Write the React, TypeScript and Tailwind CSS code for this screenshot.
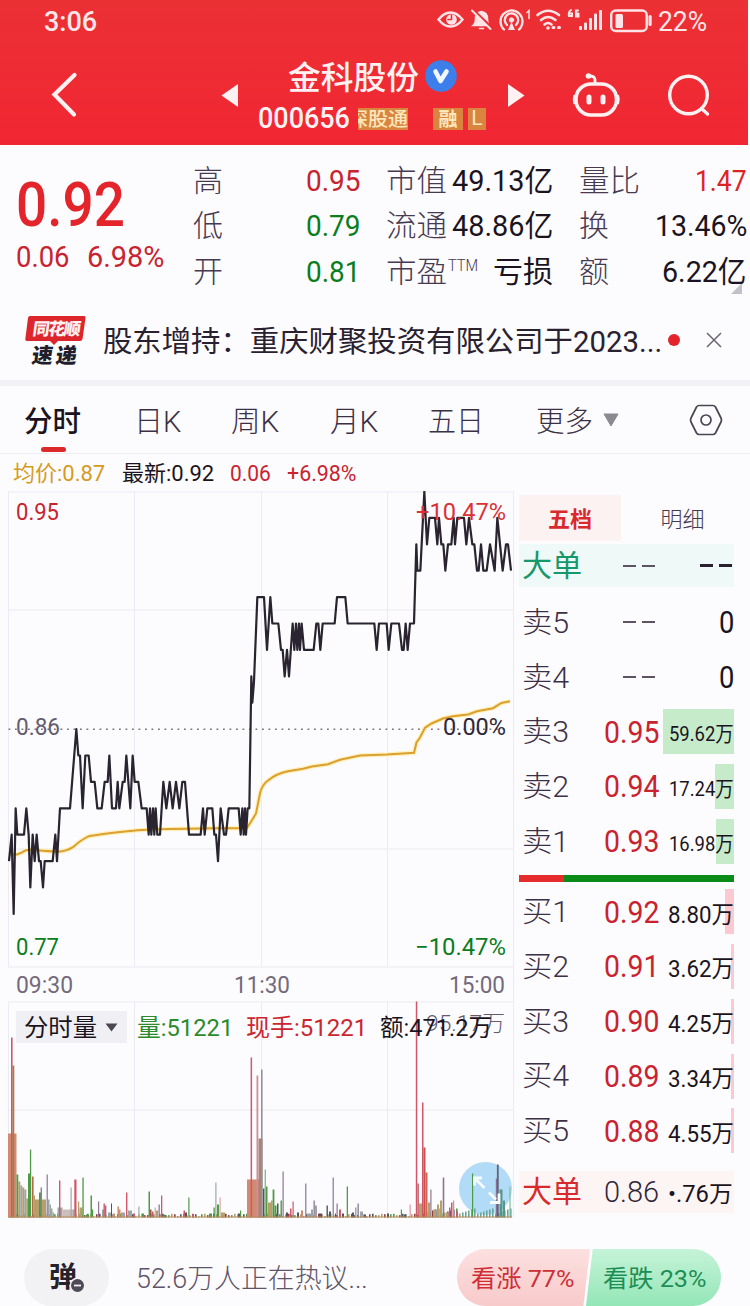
import { useLayoutEffect, useRef, type ReactNode } from "react";

const FONT = "font-[Roboto,'Noto_Sans_CJK_SC',sans-serif]";

/** One line of text, condensed or stretched to fill the width of its box. */
function Fit({ className = "", children }: { className?: string; children: ReactNode }) {
  const box = useRef<HTMLSpanElement>(null);
  const text = useRef<HTMLSpanElement>(null);
  useLayoutEffect(() => {
    if (!box.current || !text.current) return;
    const natural = text.current.offsetWidth;
    if (natural > 0) text.current.style.transform = `scaleX(${box.current.clientWidth / natural})`;
  });
  return (
    <span ref={box} className={`flex shrink-0 items-center leading-none ${className}`}>
      <span ref={text} className="inline-block origin-left whitespace-nowrap">
        {children}
      </span>
    </span>
  );
}

function StatusIcons() {
  return (
    <svg className="h-[36px] w-[222px] shrink-0" viewBox="434 4 222 36" fill="none" stroke="#ffe3e6" strokeWidth="2.4" strokeLinecap="round">
      <path d="M438.500 19.500Q444 12.500 450.500 12.500T462.500 19.500Q457 26.500 450.500 26.500T438.500 19.500Z" />
      <circle cx="451.500" cy="19.500" r="5.300" fill="#ffe3e6" stroke="none" />
      <path d="M451.500 15v4.500h-3.500" stroke="#ed2c32" strokeWidth="1.500" />
      <path d="M473 25.500q2.500-2 2.500-7q0-6 6-7q6 1 6 7q0 5 2 7ZM479.500 28.500h4" fill="#ffe3e6" strokeWidth="1.500" />
      <path d="M473 10L493 29" stroke="#ed2c32" strokeWidth="3" />
      <path d="M472 10.500L490.500 29" strokeWidth="2" />
      <path d="M504 29.500A11 11 0 1 1 519 29.500M507 25A6.700 6.700 0 1 1 516 25" strokeWidth="2.300" />
      <circle cx="511.500" cy="20" r="2.200" fill="#ffe3e6" strokeWidth="1" />
      <path d="M511.500 22l-3.500 8h7z" fill="#ffe3e6" stroke="none" />
      <path d="M527 12.500l2-2v8" strokeWidth="1.500" />
      <path d="M537.500 15Q548 6.500 559 15M541 20Q548 14 555.500 20M544.500 24.500Q548 21.500 551.500 24.500" strokeWidth="2.600" />
      <circle cx="548" cy="28" r="1.800" fill="#ffe3e6" stroke="none" />
      <path d="M553 27.500h1M558.500 27.500h1" strokeWidth="3" />
      <path d="M571 10q-3 2-2 6h3v-2.500h-2M576.500 12.500v3M578 10.500h-2v6h2.500v-3" strokeWidth="2" />
      <g stroke="none" fill="#ffe3e6">
        <rect x="579" y="26" width="3" height="4" rx="1" />
        <rect x="584" y="22.500" width="3" height="7.500" rx="1" />
        <rect x="589" y="18" width="3" height="12" rx="1" />
        <rect x="594" y="13.500" width="3" height="16.500" rx="1" />
        <rect x="599" y="10" width="3" height="20" rx="1" />
        <rect x="615.500" y="14" width="7.500" height="14" rx="1.500" />
        <rect x="648.500" y="15" width="3.200" height="11" rx="1.500" />
      </g>
      <rect x="611.200" y="10.500" width="35.500" height="20.500" rx="4.500" strokeWidth="2.400" />
    </svg>
  );
}

function Header() {
  return (
    <header className="flex h-[145px] w-[748px] flex-col bg-linear-to-b from-[#eb3034] to-[#f12633] text-[#fff1f2]">
      <div className="flex h-[44px] items-center pl-[44px] text-[28px] text-[#ffe6e8]">
        <Fit className="w-[53px] font-medium">3:06</Fit>
        <div className="ml-[337px] flex items-center">
          <StatusIcons />
          <Fit className="ml-[2px] w-[49px] text-[27px]">22%</Fit>
        </div>
      </div>
      <div className="flex h-[101px] items-center">
        <svg className="ml-[48px] h-[50px] w-[34px]" viewBox="0 0 34 50" fill="none" stroke="#fff1f2" strokeWidth="4.200" strokeLinecap="round">
          <path d="M26.500 5L6.500 24.500L26 44.500" />
        </svg>
        <svg className="ml-[138px] h-[24px] w-[19px]" viewBox="0 0 19 24" fill="#fff1f2">
          <path d="M1.500 12.500L18 1V24Z" />
        </svg>
        <div className="ml-[19px] flex w-[232px] flex-col">
          <div className="flex h-[46px] items-center">
            <Fit className="mt-[4px] ml-[30px] w-[131px] text-[32px] font-medium">金科股份</Fit>
            <svg className="ml-[5px] h-[34px] w-[34px]" viewBox="0 0 34 34">
              <circle cx="17" cy="17" r="15.800" fill="#3c7fea" />
              <path d="M11.500 12.500L16.500 22L22.500 12.500" fill="none" stroke="#f1f7ff" strokeWidth="4.600" strokeLinecap="round" strokeLinejoin="round" />
            </svg>
          </div>
          <div className="flex h-[38px] items-center">
            <Fit className="mt-[2px] w-[92px] text-[29px] font-medium">000656</Fit>
            <div className="mt-[2px] ml-[8px] flex h-[22px] w-[50px] items-center justify-end overflow-hidden bg-[#d98540] text-[#fde8bd]">
              <Fit className="mt-[2px] w-[60px] pr-[3px] text-[19px] font-medium">深股通</Fit>
            </div>
            <div className="mt-[2px] ml-[25px] flex h-[22px] w-[30px] items-center justify-center bg-[#d98540] text-[#fde8bd]">
              <Fit className="mt-[2px] w-[19px] text-[19px] font-bold">融</Fit>
            </div>
            <div className="mt-[2px] ml-[5px] flex h-[22px] w-[18px] items-center justify-center bg-[#d98540] text-[21px] leading-none text-[#fde8bd]">L</div>
          </div>
        </div>
        <svg className="ml-[17px] h-[24px] w-[19px]" viewBox="0 0 19 24" fill="#fff1f2">
          <path d="M17.500 12.500L1 1V24Z" />
        </svg>
        <svg className="ml-[43px] h-[48px] w-[54px]" viewBox="568 71 54 48" fill="none" stroke="#fff1f2" strokeWidth="3.600" strokeLinecap="round">
          <rect x="575" y="84" width="40.500" height="31" rx="15" />
          <path d="M573.600 96q-1.200 3.500 0 7M616.900 96q1.200 3.500 0 7" strokeWidth="2.600" />
          <path d="M588 76q7-1 6 7" strokeWidth="3" />
          <circle cx="587.500" cy="76" r="2.800" fill="#fff1f2" stroke="none" />
          <path d="M588 97v5M602 97v5" strokeWidth="5" />
        </svg>
        <svg className="ml-[43px] h-[50px] w-[48px]" viewBox="665 70 48 50" fill="none" stroke="#fff1f2" strokeWidth="3.400" strokeLinecap="round">
          <circle cx="687.500" cy="95" r="18.800" />
          <path d="M700.500 108.500L706.500 114" />
        </svg>
      </div>
    </header>
  );
}

const quoteRows = [
  { a: "高", av: "0.95", ac: "text-[#c8232f]", b: "市值", bv: "49.13亿", c: "量比", cv: "1.47", cw: "w-[52px]", cc: "text-[#dc2427]" },
  { a: "低", av: "0.79", ac: "text-[#0b7d1c]", b: "流通", bv: "48.86亿", c: "换", cv: "13.46%", cw: "w-[92px]", cc: "text-[#1b1420]" },
  { a: "开", av: "0.81", ac: "text-[#0b7d1c]", b: "市盈", bv: "亏损", c: "额", cv: "6.22亿", cw: "w-[85px]", cc: "text-[#1b1420]" },
];

function Quote() {
  return (
    <section className="flex h-[155px]">
      <div className="w-[193px] pt-[25px] pl-[16px] text-[#c8232f]">
        <Fit className="h-[69px] w-[109px] text-[62px] font-medium text-[#e3242a]">0.92</Fit>
        <div className="flex h-[36px] items-center gap-[17px] text-[30px]">
          <Fit className="w-[54px]">0.06</Fit>
          <Fit className="w-[77px]">6.98%</Fit>
        </div>
      </div>
      <div className="flex flex-1 flex-col pt-[13px] text-[30px]">
        {quoteRows.map((r) => (
          <div key={r.a} className="flex h-[45.500px] items-center">
            <Fit className="w-[30px] font-light text-[#473a50]">{r.a}</Fit>
            <Fit className={`ml-[83px] w-[55px] ${r.ac}`}>{r.av}</Fit>
            <Fit className="ml-[25px] w-[61px] font-light text-[#473a50]">{r.b}</Fit>
            {r.b === "市盈" ? (
              <>
                <Fit className="mb-[12px] ml-[1px] w-[30px] text-[16px] font-light text-[#473a50]">TTM</Fit>
                <Fit className="ml-[15px] w-[60px] text-[#1b1420]">{r.bv}</Fit>
              </>
            ) : (
              <Fit className="ml-[5px] w-[101px] text-[#1b1420]">{r.bv}</Fit>
            )}
            <Fit className={`ml-[26px] font-light text-[#473a50] ${r.c.length > 1 ? "w-[61px]" : "w-[30px]"}`}>{r.c}</Fit>
            <span className="flex flex-1 justify-end pr-[3px]">
              <Fit className={`${r.cw} ${r.cc}`}>{r.cv}</Fit>
            </span>
          </div>
        ))}
        <svg className="mt-[-12px] mr-[8px] h-[11px] w-[11px] self-end" viewBox="0 0 11 11">
          <path d="M11 0V11H0Z" fill="#c3c0c7" />
        </svg>
      </div>
    </section>
  );
}

function News() {
  return (
    <section className="flex h-[86px] items-center border-b-[6px] border-[#f1f1f6] text-[#2a2130]">
      <svg className="ml-[22px] h-[56px] w-[66px] shrink-0" viewBox="22 312 66 56">
        <path d="M30 316H84Q86 316 85.500 318L82.500 339Q82 341 80 341H58L54 345L50 341H27Q25 341 25.300 339L28 318Q28.300 316 30 316Z" fill="#dc262c" />
        <g transform="skewX(-8)" className="font-['Noto_Sans_CJK_SC',sans-serif]">
          <text x="79" y="335" fontSize="17" fontWeight="900" fill="#fff0f1" textLength="48">同花顺</text>
          <text x="82" y="363.500" fontSize="21" fontWeight="900" fill="#221d2b" textLength="45">速递</text>
        </g>
      </svg>
      <Fit className="mt-[5px] ml-[15px] w-[559px] text-[29px]">股东增持：重庆财聚投资有限公司于2023...</Fit>
      <span className="ml-[6px] h-[12px] w-[12px] rounded-full bg-[#e3242a]" />
      <svg className="ml-[24px] h-[20px] w-[20px]" viewBox="0 0 20 20" stroke="#6c6474" strokeWidth="1.500" fill="none">
        <path d="M3 3L17 17M17 3L3 17" />
      </svg>
    </section>
  );
}

function Tabs() {
  return (
    <nav className="flex h-[68px] items-center border-b border-[#ececf2] text-[29px] font-light text-[#3c3046]">
      <div className="relative ml-[24px] flex h-full items-center font-medium text-[#1b1420]">
        <Fit className="w-[57px] pt-[5px]">分时</Fit>
        <span className="absolute bottom-[1px] left-[17px] h-[5px] w-[25px] rounded-full bg-[#dc2a2a]" />
      </div>
      <Fit className="ml-[53px] w-[47px] pt-[5px]">日K</Fit>
      <Fit className="ml-[50px] w-[48px] pt-[5px]">周K</Fit>
      <Fit className="ml-[51px] w-[48px] pt-[5px]">月K</Fit>
      <Fit className="ml-[50px] w-[56px] pt-[5px]">五日</Fit>
      <Fit className="ml-[52px] w-[57px] pt-[5px]">更多</Fit>
      <svg className="ml-[10px] h-[14px] w-[16px]" viewBox="0 0 16 14">
        <path d="M1 1H15L8 13Z" fill="#8d8991" stroke="#8d8991" strokeLinejoin="round" />
      </svg>
      <svg className="ml-[69px] h-[34px] w-[36px]" viewBox="0 0 36 34" fill="none" stroke="#4c4553" strokeWidth="1.700" strokeLinejoin="round">
        <path d="M11 2.500H25Q26.500 2.500 27.500 4L33 15Q34 17 33 19L27.500 30Q26.500 31.500 25 31.500H11Q9.500 31.500 8.500 30L3 19Q2 17 3 15L8.500 4Q9.500 2.500 11 2.500Z" />
        <circle cx="18" cy="17" r="5" />
      </svg>
    </nav>
  );
}

function InfoLine() {
  return (
    <div className="flex h-[37px] items-center pt-[3px] pl-[13px] text-[22px] text-[#c8232f]">
      <Fit className="w-[92px] text-[#d79a22]">均价:0.87</Fit>
      <Fit className="ml-[17px] w-[92px] text-[#1b1420]">最新:0.92</Fit>
      <Fit className="ml-[16px] w-[41px]">0.06</Fit>
      <Fit className="ml-[16px] w-[70px]">+6.98%</Fit>
    </div>
  );
}

/* Pairs of x (in thirds of a pixel) and price ticks above the 0.86 close. */
const morning: number[][] = [
  [27, -5], [35, -4], [37, -5], [41, -7], [47, -3], [52, -4], [72, -4], [79, -3], [86, -4], [91, -6], [98, -4], [104, -5], [110, -4], [117, -5],
  [122, -5], [129, -6], [134, -5], [158, -5], [166, -4], [171, -5], [180, -3], [210, -3], [229, 0], [235, -1], [240, -1], [248, -3], [256, -1],
  [266, -1], [273, -2], [284, -2], [292, -3], [305, -3], [314, -2], [323, -2], [328, -1], [336, -3], [348, -3], [353, -2], [358, -3], [368, -2],
  [374, -2], [379, -1], [385, -2], [391, -3], [398, -1], [404, -2], [415, -2], [425, -3], [440, -3], [446, -4], [450, -3], [454, -4], [459, -3],
  [463, -4], [467, -3], [472, -4], [480, -4], [490, -2], [499, -3], [509, -2], [518, -3], [528, -2], [538, -3], [547, -2], [555, -2], [567, -4],
  [602, -4], [609, -3], [614, -4], [622, -3], [637, -3], [643, -4], [648, -4], [654, -5], [662, -3], [672, -4], [678, -4], [686, -3], [716, -3],
  [722, -4], [727, -3], [731, -4], [735, -3], [738, -4], [743, -3], [748, -3],
];
const afternoon: number[][] = [
  [34, 2], [37, 1], [42, 1.8], [52, 5], [72, 5], [81, 3], [91, 5], [97, 4], [115, 4], [123, 3], [128, 3], [134, 2], [141, 3], [147, 2], [158, 4],
  [163, 3], [168, 4], [172, 3], [177, 4], [180, 3], [185, 4], [192, 3], [221, 3], [229, 4], [235, 4], [241, 3], [248, 4], [284, 4], [291, 5],
  [316, 5], [323, 4], [403, 4], [410, 3], [417, 4], [440, 4], [446, 3], [454, 4], [477, 4], [486, 3], [491, 3], [497, 4], [503, 3], [510, 4],
  [522, 4], [529, 7], [532, 6], [541, 6], [553, 9], [561, 7], [568, 8], [585, 8], [592, 7], [597, 8], [604, 7], [610, 7], [616, 6], [624, 7],
  [634, 7], [641, 8], [645, 7], [652, 8], [672, 8], [679, 7], [687, 8], [697, 7], [703, 7], [711, 6], [716, 6], [723, 7], [730, 6], [740, 6],
  [750, 7], [764, 6], [772, 8], [788, 6], [798, 7], [804, 7], [813, 6],
];
const priceY = (tick: number) => 728.6 - 26.4 * tick;
const pricePoints = [
  ...morning.map(([x, t]) => `${x / 3},${priceY(t)}`),
  ...afternoon.map(([x, t]) => `${240 + x / 3},${priceY(t)}`),
].join(" ");
const averagePath =
  "M9 854L17 854L22 852Q27 848 37 849.500T61 851Q71 849 75 845T88 836Q100 833.500 133 830.300Q150 828.500 187 828.300L217 827.700H246.700L250.500 822L256 813L260 793Q262 784 268 780Q276 773 288 770.700L303 768.300L312 766L328 763.700L340 759.300L360 755L387 754L414 752.300L416.500 742L420 737L425 727.300L431.500 723L443 718L453 715.700L468 714L477 710.700L493 707.700L501.500 702.500L510 700.700";

/* Volume bars: x, height, width, colour. */
const R = "#d0566a", B = "#d28a70", G = "#4f9a45", D = "#54545c", P = "#8a7596", O = "#b5a06a", S = "#9fa5a5";
const bars: [number, number, number, string][] = [
  [8, 84, 8.500, B], [11, 180, 1.600, R], [12.500, 152, 1.800, "#ab7b4c"], [16.500, 43, 1.800, G], [18.300, 36, 2, O], [20.300, 32, 2, S], [22.300, 30, 2, O], [24.300, 28, 2, S],
  [26.300, 19, 2, O], [28, 44, 2, G], [29.900, 68, 1.300, G], [32, 41, 1.600, "#b36b44"], [33.500, 22, 1.500, O], [35, 18, 5, O], [39, 25, 1.800, G], [40.700, 30, 1, D], [42, 18, 4, O],
  [46.600, 43, 1.200, P], [48, 18, 1.500, S], [49.500, 13, 1.500, S], [51, 9, 1.500, S], [52.500, 5, 1.500, S], [57.500, 10, 5, S], [59, 37, 1.400, R], [62.500, 8, 10, "#cdbebb"],
  [70.500, 30, 1.200, S], [72.500, 8, 2, S], [74.300, 38, 2.200, R], [78, 16, 1.200, O], [79.500, 10, 3, O], [82.400, 40, 1.300, G], [86, 3, 3, G], [90.500, 22, 1.500, G], [92, 8, 1.200, G],
  [98, 16, 1.200, P], [102, 8, 2, S], [103.500, 14, 1.400, R], [105, 12, 1.400, P], [108, 5, 3, S], [111, 14, 1, D], [113, 4, 2, O], [117.500, 11, 1.500, B], [119, 8, 1.500, B], [121, 5, 4, S],
  [126, 25, 1.400, R], [128, 7, 4, S], [133, 4, 2, R], [138.300, 11, 1.200, S], [142, 4, 2, G], [148.500, 26, 1.500, G], [150, 8, 1.500, "#8a5b3a"], [152, 6, 1.500, R], [154.500, 10, 1.500, "#d5b7b4"],
  [156, 7, 2, O], [158.500, 13, 1.300, P], [161, 22, 1.300, R], [163, 3, 2, G], [183.500, 7, 1.500, R], [185, 5, 2, D], [188.300, 20, 1.200, G], [192, 3, 2, R], [209, 4, 3, G], [213.500, 10, 1.300, G],
  [215.300, 35, 1.200, S], [217, 13, 2, G], [219.500, 20, 1.200, "#dca5a0"], [221, 5, 4, O], [238, 4, 2, D], [240, 7, 1.200, G], [247, 38, 15, B], [247, 35, 2, B], [250.600, 160, 1.500, R],
  [256.500, 142, 1.800, "#d08f91"], [258.500, 79, 4, "#a8837c"], [261, 148, 1.600, "#93909a"], [263, 29, 1.500, D], [264.600, 48, 1.400, "#8abd91"], [266, 31, 1.500, G], [268, 15, 3, O], [271, 17, 1.500, O],
  [272.600, 28, 1.800, G], [274.500, 12, 2, G], [277, 14, 1.500, D], [280.500, 17, 1.400, G], [282.500, 46, 1.200, P], [286, 5, 2, D], [290, 9, 1.500, R], [292.500, 16, 1.200, R], [297, 5, 2, D], [301, 7, 2, B],
  [305.200, 34, 1.200, P], [307, 4, 3, S], [311, 8, 2, S], [313.500, 17, 1.300, P], [315, 12, 2, S], [319, 4, 3, D], [326.500, 12, 1.400, D], [329, 6, 2, D], [332.600, 40, 1.200, P], [335, 4, 1, D],
  [336.500, 14, 1.200, P], [339, 8, 2, R], [342, 4, 2, D], [346.700, 31, 1.300, G], [352, 5, 2, D], [355, 10, 1.500, S], [357.500, 14, 1.300, P], [360, 6, 3, S], [364, 3, 2, D], [387, 4, 2, D],
  [400.800, 8, 1.200, G], [404, 3, 2, D], [409.500, 13, 1.300, "#e3a0ac"], [415.800, 216, 1.500, R], [417.500, 34, 1.300, "#b75257"], [419, 14, 3, O], [422, 115, 1.500, R], [423.500, 70, 2, "#cf504b"],
  [425.500, 45, 2, "#cf6452"], [428, 15, 2, O], [430.300, 28, 1.200, P], [433, 8, 3, O], [437, 13, 2, O], [440, 17, 2, O], [442.700, 40, 1.600, P], [446, 5, 2, O], [449, 10, 1.500, R], [451, 15, 1.500, R],
  [453, 17, 1.200, S], [456, 6, 2, R], [472, 44, 1.200, G], [495.800, 39, 1.200, P], [496.900, 53, 1.800, "#626178"], [499.500, 28, 3, "#559789"], [503, 17, 2, "#559789"], [509.400, 31, 1.200, "#7cbf9b"],
];
const tickColors = [G, D, "#8c3d42", O];

function Charts() {
  return (
    <div className="relative h-[727px] w-[519px] shrink-0">
      <svg className={`h-[727px] w-[519px] ${FONT}`} viewBox="0 490.500 519 727" fill="none">
        <g stroke="#ebebf1" strokeWidth="1">
          <path d="M8 491.500H513M8 609.500H513M8 848.500H513M8 966.500H513M8.500 491V966M134.500 491V966M261.500 491V966M387.500 491V966M513.500 491V1217" />
          <path d="M8 1001.500H513M8 1109.500H513M8.500 1001V1217M134.500 1001V1217M261.500 1001V1217M387.500 1001V1217" />
        </g>
        <path d="M8.500 728.800H505" stroke="#77737f" strokeWidth="1.600" strokeDasharray="1.800 4.700" />
        <path d={averagePath} stroke="#fff0bd" strokeWidth="4.500" />
        <path d={averagePath} stroke="#dba02f" strokeWidth="2" />
        <polyline points={pricePoints} stroke="#292430" strokeWidth="2.200" strokeLinejoin="round" />
        <g fontSize="23">
          <text x="16" y="519.500" fill="#c8232f" textLength="43" lengthAdjust="spacingAndGlyphs">0.95</text>
          <text x="416" y="519.500" fill="#dc3038" textLength="90" lengthAdjust="spacingAndGlyphs">+10.47%</text>
          <text x="16" y="734.500" fill="#655b6e" textLength="44" lengthAdjust="spacingAndGlyphs">0.86</text>
          <text x="443" y="734.500" fill="#302739" textLength="63" lengthAdjust="spacingAndGlyphs">0.00%</text>
          <text x="16" y="954.500" fill="#0b7d1c" textLength="43" lengthAdjust="spacingAndGlyphs">0.77</text>
          <text x="415" y="954.500" fill="#0b7d1c" textLength="91" lengthAdjust="spacingAndGlyphs">−10.47%</text>
        </g>
        <g fontSize="23" fill="#746a7c">
          <text x="16" y="992.500" textLength="57" lengthAdjust="spacingAndGlyphs">09:30</text>
          <text x="234" y="992.500" textLength="56" lengthAdjust="spacingAndGlyphs">11:30</text>
          <text x="449" y="992.500" textLength="56" lengthAdjust="spacingAndGlyphs">15:00</text>
        </g>
        <circle cx="485.500" cy="1188" r="26.500" fill="#b2dbf8" />
        {Array.from({ length: 168 }, (_, i) => {
          const h = i > 136 ? 4 + ((i * 7) % 6) : 1 + ((i * i * 5) % 7) / 2.2;
          return <rect key={i} x={9 + i * 3} y={1217 - h} width="1.600" height={h} fill={i > 150 ? "#69a69b" : tickColors[(i * 7 + (i >> 2)) % 4]} />;
        })}
        {bars.map(([x, h, w, c], i) => (
          <rect key={i} x={x} y={1217 - h} width={w} height={h} fill={c} />
        ))}
        <path d="M8 1216.500H512" stroke="#b98b5b" strokeWidth="1.200" />
        <path d="M474.500 1185V1177.500H482M475.500 1178.500L484.500 1187.500M489 1192L496 1199M499 1193V1202H490" stroke="#f5fbff" strokeWidth="2.800" />
        <text x="426" y="1030.500" fontSize="22" fontWeight="300" fill="#655b6e" textLength="79" lengthAdjust="spacingAndGlyphs">95.17万</text>
      </svg>
      <div className="absolute top-[520px] left-[16px] flex h-[32px] items-center text-[24px]">
        <div className="flex h-[32px] w-[111px] items-center bg-[#f0f0f4] pl-[8px] text-[#1b1420]">
          <Fit className="w-[73px] pt-[2px]">分时量</Fit>
          <svg className="ml-[8px] h-[9px] w-[13px]" viewBox="0 0 13 9">
            <path d="M0.500 0.500H12.500L6.500 8.500Z" fill="#4b4652" />
          </svg>
        </div>
        <Fit className="ml-[10px] w-[96px] pt-px text-[#2b8b2c]">量:51221</Fit>
        <Fit className="ml-[13px] w-[121px] pt-px text-[#cb2630]">现手:51221</Fit>
        <Fit className="ml-[13px] w-[112px] pt-px text-[#1b1420]">额:471.2万</Fit>
      </div>
    </div>
  );
}

type Level = { name: string; price?: string; qty: string; bar?: string };
const sells: Level[] = [
  { name: "卖5", qty: "0" },
  { name: "卖4", qty: "0" },
  { name: "卖3", price: "0.95", qty: "59.62万", bar: "w-[71px]" },
  { name: "卖2", price: "0.94", qty: "17.24万", bar: "w-[19px]" },
  { name: "卖1", price: "0.93", qty: "16.98万", bar: "w-[18px]" },
];
const buys: Level[] = [
  { name: "买1", price: "0.92", qty: "8.80万", bar: "w-[9px]" },
  { name: "买2", price: "0.91", qty: "3.62万", bar: "w-[3px]" },
  { name: "买3", price: "0.90", qty: "4.25万", bar: "w-[3px]" },
  { name: "买4", price: "0.89", qty: "3.34万", bar: "w-[3px]" },
  { name: "买5", price: "0.88", qty: "4.55万", bar: "w-[3px]" },
];

function Dashes({ bold = false }: { bold?: boolean }) {
  return (
    <span className="flex gap-[6px]">
      <span className={`w-[13px] ${bold ? "h-[3px] bg-[#2a2130]" : "h-[2px] bg-[#5d5365]"}`} />
      <span className={`w-[13px] ${bold ? "h-[3px] bg-[#2a2130]" : "h-[2px] bg-[#5d5365]"}`} />
    </span>
  );
}

function LevelRow({ row, tint }: { row: Level; tint: string }) {
  return (
    <div className="relative flex h-[54.700px] items-center pl-[3px]">
      {row.bar && <span className={`absolute top-[5px] right-0 h-[45px] ${row.bar} ${tint}`} />}
      <Fit className="w-[47px] pt-[2px] text-[29px] font-light text-[#3c3046]">{row.name}</Fit>
      {row.price ? (
        <Fit className="ml-[35px] w-[55px] pt-px text-[31px] text-[#c8232f]">{row.price}</Fit>
      ) : (
        <span className="ml-[54px]">
          <Dashes />
        </span>
      )}
      <span className="relative flex flex-1 justify-end text-[#1b1420]">
        {row.qty === "0" ? (
          <Fit className="w-[15px] text-[31px]">0</Fit>
        ) : (
          <Fit className={`mt-[6px] ${row.qty.length > 5 ? "w-[65px] text-[21px]" : "w-[66px] text-[24px]"}`}>{row.qty}</Fit>
        )}
      </span>
    </div>
  );
}

function OrderBook() {
  return (
    <aside className="flex w-[215px] flex-col pt-[4px]">
      <div className="flex h-[46px] text-[22px]">
        <div className="flex w-[102px] items-center justify-center bg-[#fdf2f2] font-bold text-[#d82a2d]">
          <Fit className="w-[44px] pt-[3px]">五档</Fit>
        </div>
        <div className="flex flex-1 items-center justify-center pl-[10px] font-light text-[#473a50]">
          <Fit className="w-[44px] pt-[3px]">明细</Fit>
        </div>
      </div>
      <div className="mt-[3px] flex h-[43px] items-center bg-[#eff9f7] pl-[3px]">
        <Fit className="w-[60px] text-[30px] text-[#16986a]">大单</Fit>
        <span className="ml-[41px]">
          <Dashes />
        </span>
        <span className="flex flex-1 justify-end pr-[2px]">
          <Dashes bold />
        </span>
      </div>
      <div className="mt-[8px]">
        {sells.map((row) => (
          <LevelRow key={row.name} row={row} tint="bg-[#c5ebcb]" />
        ))}
      </div>
      <div className="mt-[7px] flex h-[7px] shrink-0">
        <span className="w-[45px] bg-[#e52b2c]" />
        <span className="flex-1 bg-[#0b8c18]" />
      </div>
      <div className="mt-[2px]">
        {buys.map((row) => (
          <LevelRow key={row.name} row={row} tint="bg-[#fbc9d0]" />
        ))}
      </div>
      <div className="mt-[13px] flex h-[42px] items-center bg-[#fdf5f4] pl-[3px]">
        <Fit className="w-[60px] text-[30px] text-[#d82a2d]">大单</Fit>
        <Fit className="ml-[22px] w-[55px] text-[30px] font-light text-[#302739]">0.86</Fit>
        <Fit className="mt-[5px] ml-[9px] w-[65px] text-[23px] text-[#1b1420]">•.76万</Fit>
      </div>
    </aside>
  );
}

function Footer() {
  return (
    <footer className="flex h-[88px] items-start pt-[31px]">
      <div className="ml-[24px] flex h-[57px] w-[85px] items-center justify-center rounded-full bg-[#f2f2f5]">
        <svg className="h-[40px] w-[40px]" viewBox="0 0 40 40">
          <text x="2" y="29" fontSize="28" fontWeight="700" fill="#272129" className="font-['Noto_Sans_CJK_SC',sans-serif]">弹</text>
          <circle cx="30.500" cy="27.500" r="8" fill="#f2f2f5" />
          <circle cx="30.500" cy="27.500" r="6.500" fill="#504a56" />
          <path d="M27 27.500H34" stroke="#f2f2f5" strokeWidth="1.800" />
        </svg>
      </div>
      <Fit className="ml-[27px] h-[61px] w-[232px] text-[27px] font-light text-[#5f5468]">52.6万人正在热议...</Fit>
      <div className="ml-[89px] flex h-[57px] text-[24px]">
        <div className="mr-[-4px] flex w-[133px] items-center rounded-l-full bg-linear-to-b from-[#fce0e0] to-[#f8caca] pl-[14px] text-[#cf2e36] [clip-path:polygon(0_0,100%_0,95%_100%,0_100%)]">
          <Fit className="w-[104px] pt-[2px]">看涨 77%</Fit>
        </div>
        <div className="flex w-[135px] items-center rounded-r-full bg-linear-to-b from-[#c5f3d8] to-[#93e6b7] pl-[17px] text-[#1d8e55] [clip-path:polygon(5%_0,100%_0,100%_100%,0_100%)]">
          <Fit className="w-[104px] pt-[2px]">看跌 23%</Fit>
        </div>
      </div>
    </footer>
  );
}

export default function App() {
  return (
    <main className={`flex h-[1306px] w-[750px] flex-col overflow-hidden bg-[#fcfcfe] ${FONT}`}>
      <Header />
      <Quote />
      <News />
      <Tabs />
      <InfoLine />
      <div className="flex h-[727px] shrink-0">
        <Charts />
        <OrderBook />
      </div>
      <Footer />
    </main>
  );
}
